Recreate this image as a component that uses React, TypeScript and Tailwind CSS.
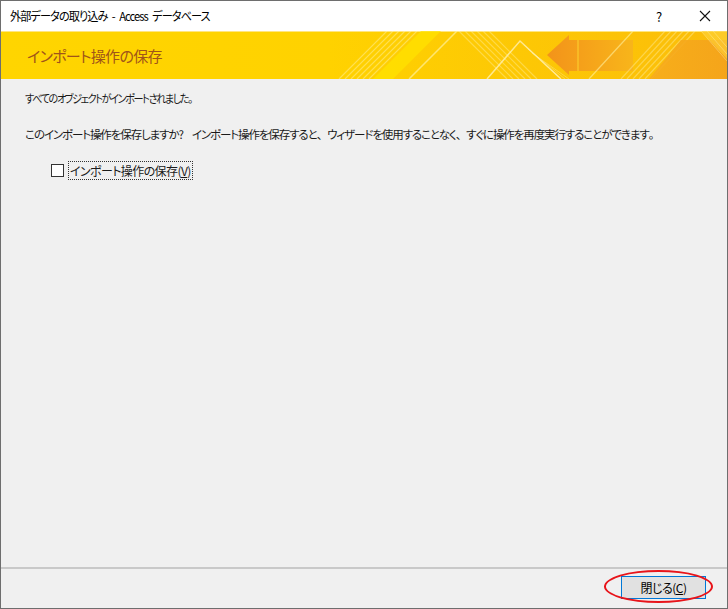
import React from "react";

const jp = "font-['Noto_Sans_CJK_JP','Noto_Sans',sans-serif] [font-feature-settings:'palt']";

function Banner() {
  return (
    <svg className="absolute inset-0" width="726" height="48" viewBox="0 0 726 48" preserveAspectRatio="none">
      <defs>
        <linearGradient id="bg" x1="0" x2="1" y1="0" y2="0">
          <stop offset="0" stopColor="#ffd500" />
          <stop offset="0.45" stopColor="#ffd200" />
          <stop offset="1" stopColor="#fbbd0a" />
        </linearGradient>
        <linearGradient id="arrow" x1="0" x2="1" y1="0" y2="0">
          <stop offset="0" stopColor="#f3931a" />
          <stop offset="1" stopColor="#f8b51a" />
        </linearGradient>
        <linearGradient id="blk" x1="0" x2="1" y1="0" y2="0">
          <stop offset="0" stopColor="#f7ac1c" />
          <stop offset="1" stopColor="#f4a21c" />
        </linearGradient>
      </defs>
      <rect x="0" y="0" width="726" height="48" fill="url(#bg)" />
      <rect x="0" y="0" width="726" height="1" fill="#ffe680" />
      <polygon points="372,48 420,0 440,0 392,48" fill="#ffe400" opacity="0.7" />
      {[0, 1, 2, 3, 4, 5].map((i) => (
        <line key={"a" + i} x1={338 + i * 6} y1={48} x2={386 + i * 6} y2={0} stroke="#fff3b0" strokeOpacity="0.45" strokeWidth="1.2" />
      ))}
      <line x1="408" y1="48" x2="456" y2="0" stroke="#fff1a0" strokeOpacity="0.7" strokeWidth="1.5" />
      {[0, 1, 2, 3, 4, 5].map((i) => (
        <line key={"b" + i} x1={458 + i * 6} y1={0} x2={506 + i * 6} y2={48} stroke="#fff3b0" strokeOpacity="0.4" strokeWidth="1.2" />
      ))}
      <polyline points="486,48 519,10 560,48" fill="none" stroke="#fff0b0" strokeOpacity="0.8" strokeWidth="1.5" />
      {[1, 2, 3].map((i) => (
        <line key={"c" + i} x1={519 + i * 4} y1={10 + i * 4} x2={556 + i * 4} y2={48} stroke="#fff3b0" strokeOpacity="0.35" strokeWidth="1" />
      ))}
      <polygon points="546,24 568,4 568,9 632,9 632,40 568,40 568,44" fill="url(#arrow)" />
      <rect x="576" y="9" width="2" height="31" fill="#fbc52a" opacity="0.7" />
      {[0, 1, 2, 3, 4, 5].map((i) => (
        <line key={"d" + i} x1={620 + i * 6} y1={48} x2={664 + i * 6} y2={0} stroke="#fff3b0" strokeOpacity="0.4" strokeWidth="1.2" />
      ))}
      <line x1="588" y1="48" x2="632" y2="0" stroke="#fff1a0" strokeOpacity="0.6" strokeWidth="1.3" />
      <polygon points="648,48 680,9 726,9 726,48" fill="url(#blk)" opacity="0.9" />
      <polygon points="700,0 726,0 726,28" fill="#ffd43a" opacity="0.6" />
      {[0, 1, 2].map((i) => (
        <line key={"e" + i} x1={700 + i * 6} y1={0} x2={726 + i * 6} y2={30} stroke="#fff3b0" strokeOpacity="0.4" strokeWidth="1" />
      ))}
    </svg>
  );
}

const P = ({ c }: { c: string }) => <span className="[font-feature-settings:normal]">{c}</span>;

export default function App() {
  return (
    <div className={`w-[728px] h-[609px] border border-[#6e6e6e] bg-[#f0f0f0] flex flex-col ${jp} text-[12px] text-[#1a1a1a]`}>
      {/* title bar */}
      <div className="h-[30px] bg-white flex items-center shrink-0">
        <div className="pl-[9px] flex-1 min-w-0">
          <span className="inline-block origin-left scale-x-[0.93] text-[12px] tracking-[-1px] [word-spacing:3px] text-black leading-none whitespace-nowrap">
            外部データの取り込み - Access データベース
          </span>
        </div>
        <div className="w-[30px] text-center text-[13px] text-black leading-none mr-[8px]">?</div>
        <div className="w-[46px] flex items-center justify-center mr-[-1px]">
          <svg width="12" height="12" viewBox="0 0 12 12">
            <path d="M1 1 L11 11 M11 1 L1 11" stroke="#111" strokeWidth="1.1" fill="none" />
          </svg>
        </div>
      </div>
      {/* banner */}
      <div className="relative h-[48px] shrink-0 overflow-hidden">
        <Banner />
        <div className="relative h-full flex items-center pl-[26px] text-[15px] tracking-[-0.7px] text-[#a0541a] leading-none whitespace-nowrap">インポート操作の保存</div>
      </div>
      {/* body */}
      <div className="flex-1 pl-[24px] pt-[11px]">
        <div className="leading-[16px] h-[16px] whitespace-nowrap">
          <span className="inline-block origin-left scale-x-[0.88] text-[11.5px] tracking-[-1.6px]">
            すべてのオブジェクトがインポートされました<P c="。" />
          </span>
        </div>
        <div className="leading-[16px] h-[16px] mt-[20px] text-[11.5px] tracking-[-1.1px] whitespace-nowrap">
          このインポート操作を保存しますか?<span className="inline-block w-[9px]" />インポート操作を保存すると<P c="、" />ウィザードを使用することなく<P c="、" />すぐに操作を再度実行することができます<P c="。" />
        </div>
        <div className="flex items-center mt-[18px] ml-[26px] h-[20px]">
          <div className="w-[13px] h-[13px] border border-[#333] bg-white" />
          <div className="ml-[4px] px-[1px] border border-dotted border-[#333] leading-[17px] h-[19px] tracking-[-0.6px] whitespace-nowrap">
            インポート操作の保存(<span className="underline">V</span>)
          </div>
        </div>
      </div>
      {/* separator */}
      <div className="h-[2px] bg-[#c9c9c9] shrink-0" />
      {/* footer */}
      <div className="h-[39px] shrink-0 flex items-start justify-end pr-[21px] pt-[7px]">
        <div className="relative">
          <div className="w-[85px] h-[23px] border border-[#0078d7] bg-[#e1e1e1] flex items-center justify-center leading-none text-[12px] tracking-[-0.5px] text-black">
            閉じる(<span className="underline">C</span>)
          </div>
          <div className="absolute left-[-17px] top-[-6px] w-[109px] h-[33px] rounded-[50%] border-2 border-[#e8141a]" />
        </div>
      </div>
    </div>
  );
}
